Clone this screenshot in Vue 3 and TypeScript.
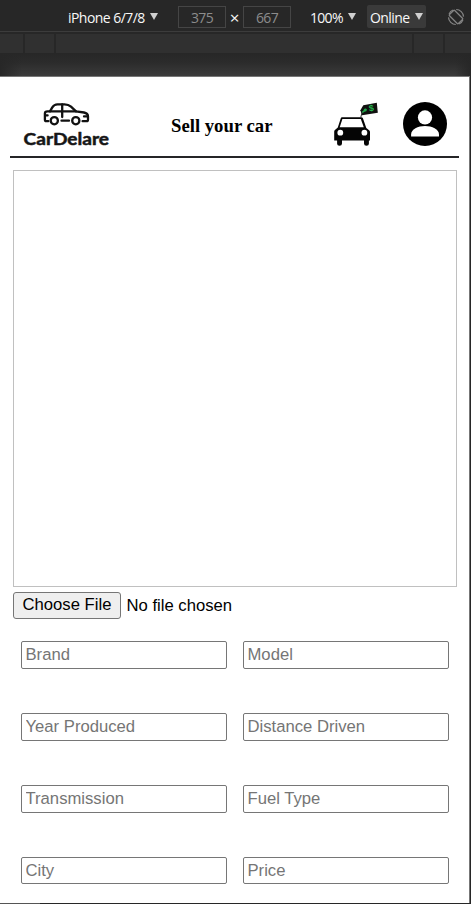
<script setup lang="ts">
import { ref } from 'vue'

interface Field {
  key: string
  label: string
}

const fields: Field[] = [
  { key: 'brand', label: 'Brand' },
  { key: 'model', label: 'Model' },
  { key: 'year', label: 'Year Produced' },
  { key: 'distance', label: 'Distance Driven' },
  { key: 'transmission', label: 'Transmission' },
  { key: 'fuel', label: 'Fuel Type' },
  { key: 'city', label: 'City' },
  { key: 'price', label: 'Price' },
]

const values = ref<Record<string, string>>({})
</script>

<template>
  <div class="window">
    <div class="toolbar">
      <div class="device"><span>iPhone 6/7/8</span><i class="arrow"></i></div>
      <div class="size">375</div>
      <span class="times">×</span>
      <div class="size">667</div>
      <div class="zoom"><span>100%</span><i class="arrow"></i></div>
      <div class="network"><span>Online</span><i class="arrow"></i></div>
      <svg class="rotate" viewBox="0 0 18 18" width="18" height="18">
        <g fill="none" stroke="#858585" stroke-width="1.2">
          <rect x="5.3" y="2.7" width="7.4" height="12.6" rx="0.8" transform="rotate(-45 9 9)" />
          <path d="M9.2 1.5A7.5 7.5 0 0 1 16.5 8.6M8.8 16.5A7.5 7.5 0 0 1 1.5 9.4" />
          <path d="M2 6.2A7.5 7.5 0 0 1 6 2M16 11.8A7.5 7.5 0 0 1 12 16" />
        </g>
      </svg>
    </div>
    <div class="ruler">
      <i class="seg first"></i><i class="seg second"></i><i class="seg middle"></i><i class="seg fourth"></i><i class="seg last"></i>
    </div>
    <div class="shade"></div>

    <div class="page">
      <header class="header">
        <svg class="logo" viewBox="20 99 94 50" width="94" height="50">
          <g fill="none" stroke="#111" stroke-width="2.3" stroke-linecap="round" stroke-linejoin="round">
            <path d="M48.3 121.2H46.3Q44.9 121.2 44.9 119.5V113.5Q44.9 111.4 47.5 111.4H50L52.3 107.4Q54.2 104.4 57.5 104.4H64.5Q68.5 104.4 71 106.7L76 111.4L84 112.5Q88 113.2 88 116.5V119.5Q88 121.2 86.5 121.2H82.6" />
            <path d="M50 111.4H76M62.2 104.5V117M45.2 115.4H47.6M84 116.4H87.5M61.5 120.7H69" />
            <circle cx="54.3" cy="120.7" r="3.6" />
            <circle cx="75.8" cy="120.7" r="3.6" />
          </g>
          <text x="23.6" y="144.6" textLength="85.4" lengthAdjust="spacingAndGlyphs">CarDelare</text>
        </svg>
        <h1>Sell your car</h1>
        <svg class="sell" viewBox="330 99 52 50" width="52" height="50">
          <path d="M342 117.2H361.2Q362.5 117.2 363 118.5L366.3 128L369.4 130.5Q370 131 370 132V140.4H368.9V143.7Q368.9 145.8 366.5 145.8Q364 145.8 364 143.5V140.4H342V143.5Q342 145.8 339.5 145.8Q337.1 145.8 337.1 143.7V140.4H334.2V131.5Q334.2 130.5 335.2 129.8L337.8 127.5L340.7 118.5Q341.1 117.2 342 117.2Z" fill="#050505" />
          <path d="M342.4 119.1H360.8L363.8 127.2H339.7Z" fill="#fff" />
          <circle cx="340.3" cy="132.7" r="2.9" fill="#fff" />
          <circle cx="364.4" cy="132.7" r="2.9" fill="#fff" />
          <path d="M360.4 110.2L363.3 105.2L376.8 102.8L377.8 112.7L362 115.2Z" fill="#10100f" />
          <path d="M360.8 117.2Q360.8 112.7 365.2 110.2" fill="none" stroke="#333" stroke-width="1" />
          <path d="M362.3 112.3L366.4 109.2" fill="none" stroke="#20a648" stroke-width="1.5" />
          <circle cx="365.2" cy="110" r="1.5" fill="#20a648" />
          <text class="dollar" x="368.8" y="111.2" transform="rotate(-8 371 108)">$</text>
        </svg>
        <svg class="user" viewBox="0 0 44 44" width="44" height="44">
          <circle cx="22" cy="22" r="22" fill="#000" />
          <circle cx="22" cy="15.4" r="7.1" fill="#fff" />
          <path d="M8.1 34.4V32.6C8.1 27.2 15 24.1 22 24.1S36 27.2 36 32.6V34.4Z" fill="#fff" />
        </svg>
      </header>
      <div class="preview"></div>
      <div class="file">
        <button type="button">Choose File</button>
        <span>No file chosen</span>
      </div>
      <form class="fields" @submit.prevent>
        <input v-for="f in fields" :key="f.key" v-model="values[f.key]" type="text" :placeholder="f.label" />
      </form>
    </div>
    <div class="footline"></div>
  </div>
</template>

<style>
body {
  margin: 0;
  background: #272727;
}
</style>

<style scoped>
.window {
  width: 471px;
  height: 904px;
  overflow: hidden;
  display: flex;
  flex-direction: column;
  background: #272727;
}
.toolbar {
  box-sizing: border-box;
  flex: none;
  height: 32px;
  padding-top: 5px;
  border-bottom: 1px solid #3c3c3c;
  display: flex;
  align-items: flex-start;
  color: #f8f8f8;
  font: 14px/24px "Open Sans", "Noto Sans", sans-serif;
  white-space: nowrap;
}
.arrow {
  width: 0;
  height: 0;
  flex: none;
  border: solid transparent;
  border-width: 7px 4.5px 0;
  border-top-color: #d0d0d0;
}
.device,
.zoom,
.network {
  display: flex;
  box-sizing: border-box;
}
.device {
  width: 178px;
  padding-left: 68px;
  letter-spacing: -0.55px;
}
.device span {
  width: 82px;
  line-height: 26px;
}
.zoom span {
  width: 38px;
  line-height: 26px;
}
.network span {
  width: 45px;
  line-height: 26px;
}
.device .arrow,
.zoom .arrow,
.network .arrow {
  margin-top: 8px;
}
.size {
  box-sizing: border-box;
  width: 48px;
  height: 22px;
  margin-top: 1px;
  border: 1px solid #454545;
  color: #8c8c8c;
  line-height: 22px;
  text-align: center;
  letter-spacing: -0.6px;
}
.times {
  width: 17px;
  text-align: center;
  font-size: 17px;
  line-height: 26px;
}
.zoom {
  width: 76px;
  padding-left: 19px;
  letter-spacing: -0.7px;
}
.network {
  width: 59px;
  height: 23px;
  padding-left: 3px;
  border-radius: 2px;
  background: #3a3a3a;
  letter-spacing: -0.6px;
}
.rotate {
  margin: 3px 0 0 21px;
}
.ruler {
  flex: none;
  height: 19px;
  margin-top: 2px;
  display: flex;
  gap: 2px;
}
.seg {
  background: #303030;
}
.first {
  width: 23px;
}
.second {
  width: 29px;
}
.middle {
  width: 356px;
}
.fourth {
  width: 29px;
}
.last {
  flex: 1;
}
.shade {
  flex: none;
  height: 23px;
  background: linear-gradient(90deg, #272727, transparent 22px, transparent 455px, #272727),
    linear-gradient(#272727, #2b2b2b 40%, #3b3b3b);
}
.page {
  box-sizing: border-box;
  flex: none;
  width: 470px;
  height: 827px;
  border-top: 1px solid #777;
  border-right: 1px solid #777;
  background: #fff;
}
.header {
  box-sizing: border-box;
  height: 81px;
  margin: 0 10px;
  padding-top: 22px;
  border-bottom: 2px solid #252527;
  display: flex;
  align-items: flex-start;
}
.logo {
  margin-left: 10px;
}
.logo text {
  font: 700 17px Lato, sans-serif;
  fill: #161616;
  stroke: #161616;
  stroke-width: 0.5px;
  stroke-linejoin: round;
}
.header h1 {
  width: 159px;
  margin: 16px 0 0 57px;
  color: #000;
  font: bold 18.72px/22px "Liberation Serif", serif;
}
.dollar {
  font: bold 9px "Liberation Sans", sans-serif;
  fill: #24b44e;
}
.user {
  margin: 3px 0 0 21px;
}
.preview {
  box-sizing: border-box;
  width: 444px;
  height: 417px;
  margin: 12px 0 0 13px;
  border: 1px solid #c0c0c0;
}
.file {
  display: flex;
  margin: 5px 0 0 13px;
  height: 27px;
  font: 16.67px/27px "Liberation Sans", Arial, sans-serif;
  color: #000;
}
.file button {
  box-sizing: border-box;
  width: 108px;
  height: 27px;
  padding: 0 0 2px;
  border: 1px solid #767676;
  border-radius: 3px;
  background: #efefef;
  color: #000;
  font: inherit;
  line-height: 23px;
}
.file span {
  margin-left: 5.5px;
}
.fields {
  display: grid;
  grid-template-columns: 206px 206px;
  grid-template-rows: 28px 28px 28px 27px;
  gap: 44px 16px;
  margin: 22px 0 0 21px;
}
.fields input {
  box-sizing: border-box;
  width: 100%;
  height: 100%;
  margin: 0;
  padding: 0 3.5px 1px;
  border: 1px solid #767676;
  border-radius: 2px;
  outline: none;
  background: #fff;
  font: 16.67px "Liberation Sans", Arial, sans-serif;
}
.fields input:nth-last-child(-n + 2) {
  padding-bottom: 0;
}
.fields input::placeholder {
  color: #757575;
  opacity: 1;
}
.footline {
  flex: none;
  height: 1px;
  background: linear-gradient(90deg, #555 40px, #272727 40px);
}
</style>
